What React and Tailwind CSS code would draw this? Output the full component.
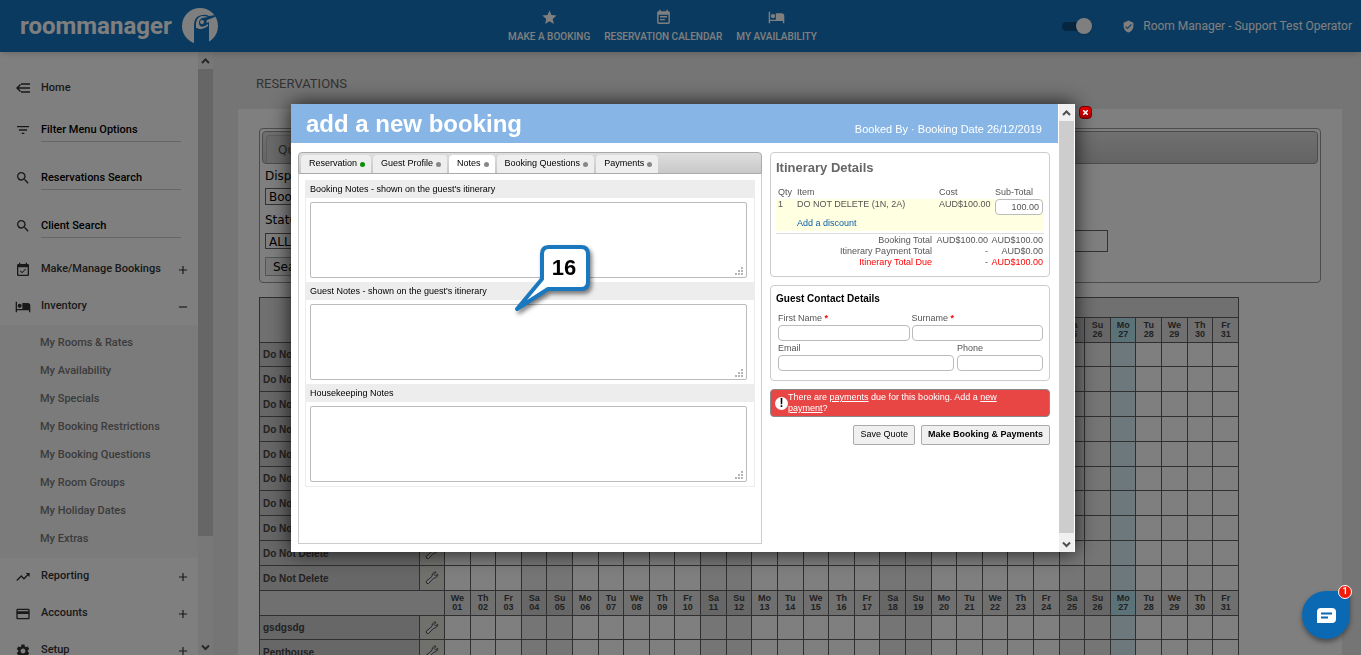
import { useState } from "react";
import {
  MdAdd,
  MdCreditCard,
  MdEventAvailable,
  MdEventNote,
  MdFilterList,
  MdRemove,
  MdSearch,
  MdSettings,
  MdStar,
  MdTrendingUp,
  MdVerifiedUser,
} from "react-icons/md";

const NAV_ITEMS = [
  { label: "MAKE A BOOKING", icon: MdStar },
  { label: "RESERVATION CALENDAR", icon: MdEventNote },
  { label: "MY AVAILABILITY", icon: BedIcon },
];

const SEARCH_ITEMS = [
  { label: "Filter Menu Options", icon: MdFilterList },
  { label: "Reservations Search", icon: MdSearch },
  { label: "Client Search", icon: MdSearch },
];

const INVENTORY_LINKS = [
  "My Rooms & Rates",
  "My Availability",
  "My Specials",
  "My Booking Restrictions",
  "My Booking Questions",
  "My Room Groups",
  "My Holiday Dates",
  "My Extras",
];

const WEEKDAYS = ["We", "Th", "Fr", "Sa", "Su", "Mo", "Tu"];
const TODAY = 27;

const DAYS = Array.from({ length: 31 }, (_, i) => ({
  date: i + 1,
  name: WEEKDAYS[i % 7],
  weekend: i % 7 === 3 || i % 7 === 4,
}));

const TABS = [
  { label: "Reservation", done: true },
  { label: "Guest Profile" },
  { label: "Notes" },
  { label: "Booking Questions" },
  { label: "Payments" },
];

const NOTES = [
  { id: "booking-notes", label: "Booking Notes - shown on the guest's itinerary" },
  { id: "guest-notes", label: "Guest Notes - shown on the guest's itinerary" },
  { id: "housekeeping-notes", label: "Housekeeping Notes" },
];

export default function App() {
  return (
    <div className="flex h-screen flex-col overflow-hidden bg-[#ebebeb] font-['Roboto',sans-serif]">
      <Header />
      <div className="flex min-h-0 flex-1">
        <Sidebar />
        <Reservations />
      </div>
      <BookingModal />
      <ChatButton />
    </div>
  );
}

// ── Header ──────────────────────────────────────────────────────────────────
function Header() {
  return (
    <header className="relative grid h-[52px] shrink-0 grid-cols-[1fr_auto_1fr] items-center bg-[#1474be] text-white shadow-md">
      <a href="#home" className="flex items-center gap-[10px] pl-5">
        <span className="text-2xl font-bold">roommanager</span>
        <Logo />
      </a>
      <nav className="flex gap-[14px] pt-0.5 pr-9">
        {NAV_ITEMS.map(({ label, icon: Icon }) => (
          <a
            key={label}
            href="#nav"
            className="flex flex-col items-center gap-[3px] text-[10px] leading-4 font-medium"
          >
            <Icon size={17} />
            {label}
          </a>
        ))}
      </nav>
      <div className="flex items-center justify-end gap-[30px] pr-[9px]">
        <label className="relative flex h-4 w-[30px] cursor-pointer items-center">
          <input
            type="checkbox"
            defaultChecked
            aria-label="Live mode"
            className="h-[9px] w-[26px] appearance-none rounded-full bg-[#0c4c80]"
          />
          <span className="absolute right-0 h-4 w-4 rounded-full bg-white shadow" />
        </label>
        <a href="#account" className="flex items-center gap-2 text-xs whitespace-nowrap">
          <MdVerifiedUser size={13} />
          Room Manager - Support Test Operator
        </a>
      </div>
    </header>
  );
}

function Logo() {
  return (
    <svg width="36" height="36" viewBox="0 0 36 36" aria-hidden="true">
      <circle cx="18" cy="18" r="18" fill="#fff" />
      <path
        d="M12 36V17Q12 8 20 7Q24 6 27 8L34 7L33 9L25 12Q23 16 27 14V36Z"
        fill="#1474be"
      />
      <path d="M14 20V15Q15 9 20 8Q24 8 26 9L20 10Q15 13 18 18Q21 20 26 16L26 19Q21 23 14 20Z" fill="#fff" />
      <path d="M14 20Q20 23 26 18V34Q20 37 14 35Z" fill="#1474be" />
      <circle cx="20" cy="14" r="2" fill="#fff" />
    </svg>
  );
}

function BedIcon({ size }) {
  return (
    <svg width={size} height={size} viewBox="0 0 24 24" fill="currentColor" aria-hidden="true">
      <path d="M1 4H3V15H11V6H19Q23 6 23 10V20H21V17H3V20H1Z" />
      <circle cx="7" cy="10" r="3" />
    </svg>
  );
}

// ── Sidebar ─────────────────────────────────────────────────────────────────
function Sidebar() {
  return (
    <aside className="flex w-[213px] shrink-0 overflow-hidden bg-white text-[11px] font-medium text-[#333]">
      <div className="flex-1 pt-[18px]">
        <a href="#home" className="flex h-9 items-center pl-4">
          <HomeIcon />
          <span className="ml-[11px]">Home</span>
        </a>
        {SEARCH_ITEMS.map(({ label, icon: Icon }) => (
          <label key={label} className="flex items-center py-3 pr-[17px] pl-[15px]">
            <Icon size={16} />
            <input
              aria-label={label}
              placeholder={label}
              className="ml-[10px] h-6 min-w-0 flex-1 border-b border-[#ccc] bg-transparent placeholder:text-black"
            />
          </label>
        ))}
        <div className="pt-px">
          <MenuRow label="Make/Manage Bookings" icon={MdEventAvailable} />
          <MenuRow label="Inventory" icon={BedIcon} open />
          <ul className="bg-[#f7f7f7] pt-1 pb-[5px] pl-10 text-[#777]">
            {INVENTORY_LINKS.map((item) => (
              <li key={item} className="flex h-7 items-center">
                <a href="#inventory">{item}</a>
              </li>
            ))}
          </ul>
          <MenuRow label="Reporting" icon={MdTrendingUp} />
          <MenuRow label="Accounts" icon={MdCreditCard} />
          <MenuRow label="Setup" icon={MdSettings} />
        </div>
      </div>
      <ScrollBar thumb="h-[467px]" />
    </aside>
  );
}

function MenuRow({ label, icon: Icon, open }) {
  return (
    <button className="flex h-[37px] w-full items-center pr-2 pl-[15px]">
      <Icon size={16} />
      <span className="ml-[10px] flex-1 text-left">{label}</span>
      {open ? <MdRemove size={14} /> : <MdAdd size={14} />}
    </button>
  );
}

function HomeIcon() {
  return (
    <svg width="14" height="10" viewBox="0 0 14 10" fill="none" stroke="#333" strokeWidth="1.500">
      <path d="M5 1H14 M1 5H14 M5 9H14 M4.500 1.500L1 5L4.500 8.500" />
    </svg>
  );
}

function ScrollBar({ thumb }) {
  return (
    <div className="flex w-[15px] shrink-0 flex-col bg-[#f0f0f0] text-[#505050]">
      <div className="flex h-[17px] shrink-0 items-center justify-center">
        <Chevron d="M1 6L4.500 2.500L8 6" />
      </div>
      <div className={`bg-[#cdcdcd] ${thumb}`} />
      <div className="mt-auto flex h-[17px] shrink-0 items-center justify-center">
        <Chevron d="M1 2.500L4.500 6L8 2.500" />
      </div>
    </div>
  );
}

function Chevron({ d }) {
  return (
    <svg width="9" height="8" viewBox="0 0 9 8" fill="none" stroke="currentColor" strokeWidth="2">
      <path d={d} />
    </svg>
  );
}

// ── Reservations page ───────────────────────────────────────────────────────
function Reservations() {
  return (
    <main className="min-w-0 flex-1 pr-[19px] pl-[25px]">
      <h1 className="pt-6 pb-[17px] pl-[18px] text-[13px] leading-4 text-[#666]">RESERVATIONS</h1>
      <div className="bg-white px-[21px] pt-[19px]">
        <section className="rounded border border-[#999] p-[2px] pb-1.5 font-['DejaVu_Sans',sans-serif] text-xs text-black">
          <div className="flex h-[33px] rounded border border-[#999] bg-linear-to-b from-[#e0e0e0] to-[#c8c8c8] pt-[3px] pl-[3px]">
            <button className="rounded-t border border-b-0 border-[#bbb] bg-[#d4d4d4] px-[11px] text-[#555]">
              Quick Search
            </button>
          </div>
          <div className="flex items-end justify-between pr-[210px] pl-[3px]">
            <div className="pb-[3px]">
              <label htmlFor="display" className="block leading-6">
                Display
              </label>
              <select
                id="display"
                className="block h-[17px] w-32 appearance-none border border-[#666] pl-[3px]"
              >
                <option>Bookings</option>
              </select>
              <label htmlFor="status" className="block pt-0.5 leading-[26px]">
                Status
              </label>
              <select
                id="status"
                className="block h-4 w-32 appearance-none border border-[#666] pl-[3px]"
              >
                <option>ALL</option>
              </select>
            </div>
            <input aria-label="Keyword" className="h-[22px] w-48 border border-[#666]" />
          </div>
          <button className="mt-[5px] ml-[3px] block h-[19px] border border-[#aaa] bg-[#f0f0f0] px-[7px]">
            Search
          </button>
        </section>
        <AvailabilityTable />
      </div>
    </main>
  );
}

function AvailabilityTable() {
  return (
    <table className="mt-[14px] w-[980px] table-fixed border-collapse font-['Liberation_Sans',sans-serif] text-[9px] font-bold text-[#444]">
      <colgroup>
        <col className="w-40" />
        <col className="w-[25px]" />
      </colgroup>
      <tbody>
        <tr className="h-5">
          <td rowSpan={2} colSpan={2} className="border border-[#606060] bg-[#e0e0e0]" />
          <td colSpan={31} className="border border-[#606060] bg-[#e0e0e0]" />
        </tr>
        <tr className="h-[25px]">
          <DayHeadings />
        </tr>
        {Array.from({ length: 10 }, (_, i) => (
          <RoomRow key={i} name="Do Not Delete" height={i % 5 === 0 ? "h-6" : "h-[25px]"} />
        ))}
        <tr className="h-[25px]">
          <td colSpan={2} className="border border-[#606060] bg-[#e0e0e0]" />
          <DayHeadings />
        </tr>
        <RoomRow name="gsdgsdg" height="h-6" />
        <RoomRow name="Penthouse" height="h-[25px]" />
      </tbody>
    </table>
  );
}

function DayHeadings() {
  return DAYS.map(({ date, name, weekend }) => {
    const fill = date === TODAY ? "bg-[#b6e4f2]" : weekend ? "bg-[#cecece]" : "bg-[#e0e0e0]";
    return (
      <th key={date} className={`border border-[#606060] p-0 leading-[9px] ${fill}`}>
        {name}
        <br />
        {String(date).padStart(2, "0")}
      </th>
    );
  });
}

function RoomRow({ name, height }) {
  return (
    <tr className={height}>
      <th className="border border-[#606060] bg-[#cecece] p-0 pl-[3px] text-left text-[10px]">
        {name}
      </th>
      <td className="border border-[#606060] bg-[#e0e0da] p-0">
        <Wrench />
      </td>
      {DAYS.map(({ date, weekend }) => (
        <td
          key={date}
          className={`border border-[#606060] p-0 ${
            date === TODAY ? "bg-[#d8f0f8]" : weekend ? "bg-[#ebebeb]" : "bg-white"
          }`}
        />
      ))}
    </tr>
  );
}

function Wrench() {
  return (
    <svg width="14" height="14" viewBox="0 0 14 14" className="mx-auto block" aria-hidden="true">
      <path
        d="M2 12.500L1 10.500L7 5.500Q6.500 2.500 9.500 1L11 1.200L9 3.500L10.500 5L12.700 3.200Q13 6.500 8.500 7.200L3.500 12.500Z"
        fill="#f4f4f4"
        stroke="#444"
      />
    </svg>
  );
}

// ── Booking modal ───────────────────────────────────────────────────────────
function BookingModal() {
  return (
    <div className="fixed inset-0 flex items-start justify-center bg-black/50 pt-[104px] pl-[5px] font-['Liberation_Sans',sans-serif]">
      <div
        role="dialog"
        aria-label="add a new booking"
        className="relative flex h-[448px] w-[784px] bg-white pr-px shadow-[0_0_20px_rgba(0,0,0,0.8)]"
      >
        <div className="min-w-0 flex-1 pr-px">
          <div className="flex h-[39px] items-center justify-between bg-[#87b5e6] pr-4 pl-[15px] text-white">
            <h2 className="text-2xl font-bold">add a new booking</h2>
            <p className="pt-3 text-[11px]">Booked By · Booking Date 26/12/2019</p>
          </div>
          <div className="flex gap-2 pt-[9px] pr-2 pl-[7px]">
            <NotesPanel />
            <div className="w-[280px] shrink-0 text-[9px] text-[#555]">
              <Itinerary />
              <GuestContact />
              <PaymentAlert />
              <div className="mt-2 flex justify-end gap-1.5">
                <button className="h-5 rounded-xs border border-[#aaa] bg-[#f0f0f0] px-1.5 text-black">
                  Save Quote
                </button>
                <button className="h-5 rounded-xs border border-[#aaa] bg-[#f0f0f0] px-1.5 font-bold text-black">
                  Make Booking &amp; Payments
                </button>
              </div>
            </div>
          </div>
        </div>
        <ScrollBar thumb="h-[412px]" />
        <button
          aria-label="Close"
          className="absolute top-0.5 -right-[17px] flex h-[13px] w-[13px] items-center justify-center rounded-sm border border-[#600] bg-linear-to-b from-[#e00] to-[#a00000] text-white"
        >
          <svg width="5" height="5" viewBox="0 0 5 5" stroke="currentColor" strokeWidth="1.500">
            <path d="M0 0L5 5M5 0L0 5" />
          </svg>
        </button>
        <Callout />
      </div>
    </div>
  );
}

function NotesPanel() {
  const [activeTab, setActiveTab] = useState("Notes");

  return (
    <div className="min-w-0 flex-1 text-[9px] text-black">
      <div className="flex h-[22px] gap-0.5 rounded-t border border-[#aaa] bg-linear-to-b from-[#dedede] to-[#c8c8c8] pt-0.5 pl-0.5">
        {TABS.map((tab) => (
          <button
            key={tab.label}
            onClick={() => setActiveTab(tab.label)}
            className={`flex items-center gap-[3px] rounded-t-sm pr-1.5 pl-2 ${
              tab.label === activeTab ? "bg-white" : "bg-[#eee]"
            }`}
          >
            {tab.label}
            <span
              className={`mt-px h-[5px] w-[5px] rounded-full ${tab.done ? "bg-[#0a8f0a]" : "bg-[#888]"}`}
            />
          </button>
        ))}
      </div>
      <div className="h-[370px] border border-t-0 border-[#ccc] px-1.5 pt-1.5">
        <div className="border border-t-0 border-[#ededed]">
          {NOTES.map((note) => (
            <div key={note.id} className="relative">
              <label htmlFor={note.id} className="block bg-[#ededed] pl-1 leading-[18px]">
                {note.label}
              </label>
              <div className="py-1 pr-[7px] pl-1">
                <textarea
                  id={note.id}
                  className="block h-[76px] w-full resize-none rounded-xs border border-[#bbb]"
                />
              </div>
              <ResizeGrip />
            </div>
          ))}
        </div>
      </div>
    </div>
  );
}

function ResizeGrip() {
  return (
    <svg
      width="8"
      height="8"
      viewBox="0 0 8 8"
      className="pointer-events-none absolute right-[11px] bottom-[7px]"
      fill="#b5b5b5"
      aria-hidden="true"
    >
      <path d="M6 0h2v2H6zM3 3h2v2H3zM6 3h2v2H6zM0 6h2v2H0zM3 6h2v2H3zM6 6h2v2H6z" />
    </svg>
  );
}

function Itinerary() {
  return (
    <section className="h-[125px] rounded border border-[#ccc] px-[5px] pt-[5px]">
      <h3 className="text-[13px] leading-5 font-bold text-[#666]">Itinerary Details</h3>
      <table className="mt-[7px] w-full table-fixed">
        <colgroup>
          <col className="w-5" />
          <col />
          <col className="w-[56px]" />
          <col className="w-[49px]" />
        </colgroup>
        <thead>
          <tr className="text-left leading-[14px]">
            <th className="pl-0.5 font-normal">Qty</th>
            <th className="pl-px font-normal">Item</th>
            <th className="font-normal">Cost</th>
            <th className="font-normal">Sub-Total</th>
          </tr>
        </thead>
        <tbody className="bg-[#ffffe1]">
          <tr className="align-top leading-[11px]">
            <td className="pl-0.5">1</td>
            <td className="pl-px">DO NOT DELETE (1N, 2A)</td>
            <td>AUD$100.00</td>
            <td>
              <input
                aria-label="Sub-Total"
                defaultValue="100.00"
                className="block h-4 w-12 rounded-sm border border-[#bbb] bg-white px-[3px] text-right"
              />
            </td>
          </tr>
          <tr className="leading-4">
            <td />
            <td colSpan={3} className="pl-px text-[#0b5ea8]">
              <a href="#discount">Add a discount</a>
            </td>
          </tr>
        </tbody>
      </table>
      <table className="mt-0.5 w-full table-fixed border-t border-[#ddd] text-right leading-[11px]">
        <colgroup>
          <col />
          <col className="w-[56px]" />
          <col className="w-[56px]" />
        </colgroup>
        <tbody>
          <tr>
            <td className="pt-px">Booking Total</td>
            <td className="pt-px">AUD$100.00</td>
            <td className="pt-px pr-px">AUD$100.00</td>
          </tr>
          <tr>
            <td>Itinerary Payment Total</td>
            <td>-</td>
            <td className="pr-px">AUD$0.00</td>
          </tr>
          <tr className="text-[#f00]">
            <td>Itinerary Total Due</td>
            <td className="text-[#555]">-</td>
            <td className="pr-px">AUD$100.00</td>
          </tr>
        </tbody>
      </table>
    </section>
  );
}

function GuestContact() {
  return (
    <section className="mt-2 h-24 rounded border border-[#ccc] pr-1.5 pl-[7px]">
      <h3 className="-ml-0.5 pt-1 pb-1 text-[10px] leading-[17px] font-bold text-black">
        Guest Contact Details
      </h3>
      <div className="grid grid-cols-2 gap-x-0.5">
        <Field label="First Name" required />
        <Field label="Surname" required />
      </div>
      <div className="grid grid-cols-[1fr_86px] gap-x-[3px]">
        <Field label="Email" />
        <Field label="Phone" />
      </div>
    </section>
  );
}

function Field({ label, required }) {
  return (
    <label className="block leading-[14px]">
      {label} {required && <span className="font-bold text-[#f00]">*</span>}
      <input className="block h-4 w-full rounded-sm border border-[#bbb]" />
    </label>
  );
}

function PaymentAlert() {
  return (
    <div className="mt-2 flex h-7 items-center rounded-sm border border-[#888] bg-[#e84545] pl-1 text-white">
      <span className="flex h-[13px] w-[13px] shrink-0 items-center justify-center rounded-full bg-white text-xs font-bold text-black">
        !
      </span>
      <p className="pr-8 leading-[11px]">
        There are{" "}
        <a href="#payments" className="underline">
          payments
        </a>{" "}
        due for this booking. Add a{" "}
        <a href="#new-payment" className="underline">
          new payment
        </a>
        ?
      </p>
    </div>
  );
}

// Numbered marker that points at the notes fields
function Callout() {
  return (
    <div className="pointer-events-none absolute top-[138px] left-[220px] h-[72px] w-[82px]">
      <svg width="82" height="80" viewBox="0 0 82 80" className="drop-shadow-[2px_3px_2px_rgba(0,0,0,0.5)]">
        <path
          d="M37 5 H70 Q77 5 77 12 V40 Q77 47 70 47 H37 L6 67 L31 37 V12 Q31 5 38 5 Z"
          fill="#fff"
          stroke="#1a78bf"
          strokeWidth="4"
          strokeLinejoin="round"
        />
      </svg>
      <span className="absolute top-3 left-[30px] w-[46px] text-center text-[22px] leading-7 font-bold text-black">
        16
      </span>
    </div>
  );
}

// ── Chat ────────────────────────────────────────────────────────────────────
function ChatButton() {
  return (
    <button
      aria-label="Open chat"
      className="fixed right-[11px] bottom-4 flex h-12 w-12 items-center justify-center rounded-full rounded-tr-md bg-[#0b69b3] shadow-[0_3px_5px_rgba(0,0,0,0.4)]"
    >
      <svg width="19" height="15" viewBox="0 0 19 15" aria-hidden="true">
        <path d="M4 0H15Q19 0 19 4V11Q19 15 15 15H0V4Q0 0 4 0Z" fill="#fff" />
        <path d="M4 5.500H15M4 9.500H11" stroke="#0b69b3" strokeWidth="2" />
      </svg>
      <span className="absolute -top-1.5 -right-0.5 flex h-[14px] w-[14px] items-center justify-center rounded-full border border-white bg-[#f31b0b] text-[9px] font-bold text-white">
        1
      </span>
    </button>
  );
}
